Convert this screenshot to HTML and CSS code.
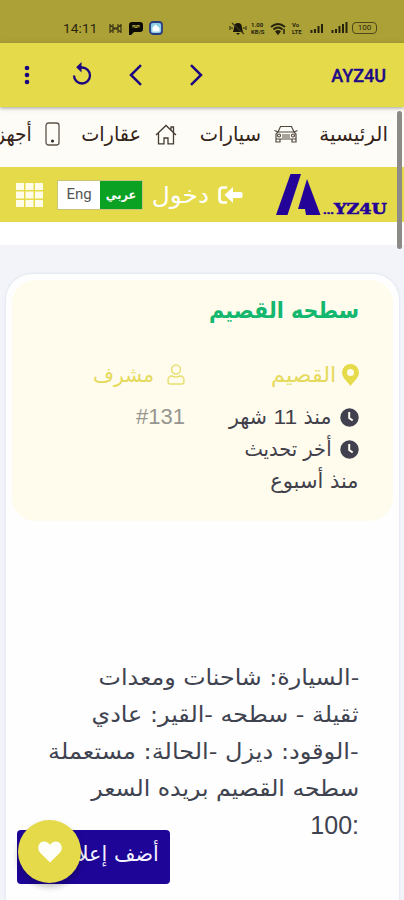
FILE: index.html
```html
<!DOCTYPE html>
<html lang="ar" dir="rtl">
<head>
<meta charset="utf-8">
<title>AYZ4U</title>
<link rel="stylesheet" href="styles.css">
</head>
<body>
<div class="screen">
  <div class="status" dir="ltr">
    <span class="time">14:11</span>
    <svg class="s-mail" width="13" height="11" viewBox="0 0 13 11"><path d="M1 1v9M12 1v9M1 2l5 4 6-4M1 9l5-4 6 4M4 1v9M9 1v9" fill="none" stroke="#3c3716" stroke-width="1.2"/></svg>
    <svg class="s-chat" width="14" height="13" viewBox="0 0 14 13"><path d="M3 0h8q3 0 3 3v4q0 3-3 3H5l-3 3H0V3q0-3 3-3z" fill="#0b0a05"/><path d="M4 5.500v-2h2v2h2v-2h2v2" fill="none" stroke="#aca136" stroke-width="1.2"/></svg>
    <svg class="s-app" width="14" height="14" viewBox="0 0 14 14"><rect x="1" y="1" width="12" height="12" rx="3" fill="#8fcfe6" stroke="#2a3d83" stroke-width="1.8"/><path d="M3.500 10.500V6.500l3-3 4 3.500v3.500z" fill="#fff"/></svg>
    <span class="grow"></span>
    <svg class="s-bell" width="18" height="13" viewBox="0 0 18 13"><path d="M9 1q4 0 4 5l1 4H4l1-4q0-5 4-5zM7 11h4l-2 2z" fill="#17150a"/><path d="M3 1l12 11M1 4v4M3 5v2M15 5v2M17 4v4" stroke="#3c3716" stroke-width="1.2"/></svg>
    <span class="speed"><b>1.00</b><b>KB/S</b></span>
    <svg class="s-wifi" width="17" height="13" viewBox="0 0 17 13"><path d="M1 5q7-6 14 0M3.500 7.500q4.500-4 9 0M6 10q2-2 4 0" fill="none" stroke="#25220e" stroke-width="1.9"/><path d="M8 12l-1.500-2h3zM14 7v5" stroke="#25220e" fill="#25220e" stroke-width="1.500"/></svg>
    <span class="volte"><b>Vo</b><b>LTE</b></span>
    <svg class="s-sig" width="15" height="12" viewBox="0 0 15 12"><path d="M1.500 8v3M5 7v4M8.500 4v7M12 2v9" stroke="#25220e" stroke-width="2"/></svg>
    <svg class="s-sig2" width="17" height="12" viewBox="0 0 17 12"><path d="M1.500 8v3M5 7v4M8.500 4v7M12 2v9M15.500 0v11" stroke="#25220e" stroke-width="2"/></svg>
    <span class="battery">100</span>
  </div>

  <div class="appbar" dir="ltr">
    <svg class="a-dots" width="6" height="20" viewBox="0 0 6 20"><g fill="#1b0781"><circle cx="3" cy="3" r="2.300"/><circle cx="3" cy="10" r="2.300"/><circle cx="3" cy="17" r="2.300"/></g></svg>
    <svg class="a-reload" width="20" height="23" viewBox="0 0 20 23"><path d="M8 5.500h2a8 8 0 1 1-8 8" fill="none" stroke="#1b0781" stroke-width="2.300"/><path d="M9.500 0v10.500L4.200 5.200z" fill="#1b0781"/></svg>
    <svg class="a-back" width="13" height="22" viewBox="0 0 13 22"><path d="M12 1.200L2 11l10 9.800" fill="none" stroke="#1b0781" stroke-width="2.500"/></svg>
    <svg class="a-next" width="13" height="22" viewBox="0 0 13 22"><path d="M1 1.200L11 11 1 20.800" fill="none" stroke="#1b0781" stroke-width="2.500"/></svg>
    <span class="grow"></span>
    <strong class="title">AYZ4U</strong>
  </div>

  <div class="view">
    <nav class="tabs">
      <span class="tab t1">الرئيسية</span>
      <svg class="i-car" width="24" height="18" viewBox="0 0 24 18"><g fill="none" stroke="#51483e" stroke-width="1.200"><path d="M4 7l2.500-5.500h11L20 7M4 7h16l2 2v5H2V9zM2 14v3h4v-3M18 14v3h4v-3M0.500 5.500L4 7M23.500 5.500L20 7M8 10h8M8 12h8"/><circle cx="5" cy="10.500" r="1.500"/><circle cx="19" cy="10.500" r="1.500"/></g></svg>
      <span class="tab t2">سيارات</span>
      <svg class="i-home" width="22" height="21" viewBox="0 0 22 21"><path d="M1 11L11 1.500 21 11M3.500 9v10.800H9V14h4v5.800h5.500V9M16 5.500V3h2.500v5" fill="none" stroke="#443b31" stroke-width="1.300"/></svg>
      <span class="tab t3">عقارات</span>
      <svg class="i-phone" width="15" height="24" viewBox="0 0 15 24"><rect x="1" y="1" width="13" height="22" rx="2.500" fill="none" stroke="#5b534a" stroke-width="1.300"/><circle cx="7.500" cy="19" r="1.500" fill="#29231b"/></svg>
      <span class="tab t4">أجهزة</span>
    </nav>

    <header class="head">
      <div class="logo" dir="ltr">
        <svg width="45" height="42" viewBox="0 0 45 42"><path d="M14.500 0H25L11.500 41H0zM31 5l13.500 36H30l-1-6h-7z" fill="#230398"/></svg>
        <span class="brand"><i>...</i>YZ4U</span>
      </div>
      <svg class="i-login" width="25" height="18" viewBox="0 0 25 18"><path d="M9 1.500H5q-3.500 0-3.500 3.500v8q0 3.500 3.500 3.500h4" fill="none" stroke="#fff" stroke-width="2.700"/><path d="M6.500 9L15 1v5h8q1.500 0 1.500 1.500v3q0 1.500-1.500 1.500h-8v5z" fill="#fff"/></svg>
      <span class="login">دخول</span>
      <div class="lang"><span class="ar">عربي</span><span class="en">Eng</span></div>
      <svg class="i-grid" width="27" height="24" viewBox="0 0 27 24"><g fill="#fffde8"><rect width="8" height="7"/><rect x="9.500" width="8" height="7"/><rect x="19" width="8" height="7"/><rect y="8.500" width="8" height="7"/><rect x="9.500" y="8.500" width="8" height="7"/><rect x="19" y="8.500" width="8" height="7"/><rect y="17" width="8" height="7"/><rect x="9.500" y="17" width="8" height="7"/><rect x="19" y="17" width="8" height="7"/></g></svg>
    </header>
    <div class="strip"></div>

    <main class="card">
      <section class="info">
        <h1><span class="fit h">سطحه القصيم</span></h1>
        <div class="cols">
          <div class="place">
            <p class="gold"><svg class="i-pin" width="17" height="22" viewBox="0 0 17 22"><path fill-rule="evenodd" d="M8.500 0a8.500 8.500 0 0 1 8.500 8.500C17 14 11 18 8.500 22 6 18 0 14 0 8.500A8.500 8.500 0 0 1 8.500 0zm0 5a3.500 3.500 0 1 0 0 7 3.500 3.500 0 0 0 0-7z" fill="#e5da4a"/></svg><span class="fit p1">القصيم</span></p>
            <p><svg class="i-clock" width="19" height="19" viewBox="0 0 19 19"><circle cx="9.500" cy="9.500" r="9.200" fill="#41404f"/><path d="M9.200 4v6l3.500 2.500" fill="none" stroke="#fffcee" stroke-width="2"/></svg><span class="fit p2">منذ <span class="num">11</span> شهر</span></p>
            <p><svg class="i-clock" width="19" height="19" viewBox="0 0 19 19"><circle cx="9.500" cy="9.500" r="9.200" fill="#41404f"/><path d="M9.200 4v6l3.500 2.500" fill="none" stroke="#fffcee" stroke-width="2"/></svg><span class="fit p3">أخر تحديث</span></p>
            <p><span class="fit p4">منذ أسبوع</span></p>
          </div>
          <div class="owner">
            <p class="gold"><svg class="i-user" width="18" height="21" viewBox="0 0 18 21"><g fill="none" stroke="#e8df72" stroke-width="1.500"><circle cx="9" cy="5.500" r="4.500"/><path d="M5 12q4 2 8 0 4 0 4 5 0 3-2 3H3q-2 0-2-3 0-5 4-5z"/></g></svg><span class="fit p5">مشرف</span></p>
            <p class="id" dir="ltr">#131</p>
          </div>
        </div>
      </section>
      <section class="desc">
        <p><span class="fit d1">-السيارة: شاحنات ومعدات</span></p>
        <p><span class="fit d2">ثقيلة - سطحه -القير: عادي</span></p>
        <p><span class="fit d3">-الوقود: ديزل -الحالة: مستعملة</span></p>
        <p><span class="fit d4">سطحه القصيم بريده السعر</span></p>
        <p class="price" dir="ltr">100:</p>
      </section>
    </main>
    <div class="scroll"></div>
  </div>
  <div class="add"><span class="fit ad">أضف إعلانك</span></div>
  <div class="fav"><svg width="24" height="22" viewBox="0 0 24 22"><path d="M12 21.500L2 11.500C-2 6.500 1.500 0 6.500.5 9.500.7 11 2.500 12 4 13 2.500 14.500.7 17.500.5 22.500 0 26 6.500 22 11.500z" fill="#fffffa"/></svg></div>
</div>
</body>
</html>
```
FILE: styles.css
```css
* { box-sizing: border-box; }
body { margin: 0; background: #f2f4f9; font-family: "DejaVu Sans Condensed", "DejaVu Sans", sans-serif; }
p, h1 { margin: 0; }
svg { display: block; flex: none; }
.screen { position: relative; width: 404px; height: 900px; overflow: hidden; }
.grow { flex: 1; }
.status { height: 43px; padding: 13px 27px 0 63px; background: #aca136; display: flex; align-items: center; color: #29250f; font-family: Roboto, sans-serif; }
.time { font-size: 13.5px; width: 46px; letter-spacing: .2px; }
.s-chat { margin-left: 7px; }
.s-app { margin-left: 6px; }
.speed, .volte { display: flex; flex-direction: column; font-size: 6px; line-height: 7px; font-weight: 500; }
.speed { width: 17px; margin-left: 4px; }
.s-wifi { margin-left: 2px; }
.volte { width: 14px; margin-left: 5px; }
.s-sig { margin-left: 4px; }
.s-sig2 { margin-left: 6px; }
.battery { width: 25px; height: 12px; margin-left: 4px; border: 1.500px solid #4d481c; border-radius: 4px; font-size: 8px; line-height: 10px; text-align: center; }
.appbar { position: relative; height: 64px; padding: 0 18px 0 24px; display: flex; align-items: center; background: #e5da4a; box-shadow: 0 1px 4px rgba(80,80,60,.55); z-index: 2; }
.a-reload { margin-left: 42px; margin-top: -3px; }
.a-back { margin-left: 37px; }
.a-next { margin-left: 48px; }
.title { color: #200a87; font: 500 18px Roboto, sans-serif; -webkit-text-stroke: .3px #200a87; }
.view { position: relative; height: 793px; }
.tabs { height: 60px; padding: 0 16px 6px 0; background: #fefcf7; display: flex; align-items: center; color: #332319; font-size: 20px; white-space: nowrap; overflow: hidden; }
.tab { flex: none; display: block; line-height: 30px; transform-origin: right center; }
.t1 { width: 69px; transform: scaleX(1.11); }
.i-car { margin: 0 4px 0 0; margin-right: 21px; }
.t2 { width: 61px; margin-right: 13px; transform: scaleX(1.08); }
.i-home { margin-right: 23px; }
.t3 { width: 59px; margin-right: 14px; transform: scaleX(1.07); }
.i-phone { margin-right: 22px; }
.t4 { margin-right: 13px; transform: scaleX(1.04); }
.head { height: 55px; padding-right: 14px; background: #e5da4a; display: flex; align-items: center; color: #fff; }
.logo { display: flex; align-items: flex-end; width: 114px; height: 42px; color: #230398; }
.brand { font: 900 15px/14px "DejaVu Serif", serif; white-space: nowrap; margin-left: 2px; margin-bottom: -2px; -webkit-text-stroke: .6px #230398; transform: scaleX(1.17); transform-origin: left; }
.brand i { font-size: 9px; font-style: normal; }
.i-login { margin-right: 33px; }
.login { width: 58px; margin-right: 9px; font-size: 23px; line-height: 30px; white-space: nowrap; transform: scaleX(1.2); transform-origin: right; }
.lang { width: 86px; height: 30px; margin-right: 8px; display: flex; border: 1px solid #c9c578; }
.lang span { width: 42px; line-height: 27px; text-align: center; font-size: 15px; }
.lang .ar { background: #0ba123; font-weight: bold; font-size: 12.5px; }
.en { background: #fff; color: #555; font-family: Roboto, sans-serif; }
.i-grid { margin-right: 14px; }
.strip { height: 23px; background: #fff; }
.card { margin: 29px 5px 0 6px; padding: 6px 6px 0; height: 650px; background: #fefefe; border-radius: 26px 26px 0 0; box-shadow: 0 0 3px rgba(180,190,215,.45); }
.info { height: 241px; padding: 13px 34px 0 20px; border-radius: 23px; background: #fffcee; color: #41404a; }
h1 { height: 65px; color: #13b76e; font-size: 23px; line-height: 34px; }
.fit { display: inline-block; white-space: nowrap; transform-origin: right center; }
.p1 { transform: scaleX(1.18); }
.p2 { transform: scaleX(1.085); }
.p3 { transform: scaleX(1.03); }
.p4 { transform: scaleX(1.11); }
.p5 { transform: scaleX(1.07); }
.d1 { transform: scaleX(1.2); }
.d2 { transform: scaleX(1.205); }
.d3 { transform: scaleX(1.215); }
.d4 { transform: scaleX(1.19); }
.ad { transform: scaleX(1.1); }
.cols { display: flex; }
.place { width: 174px; }
.owner { flex: 1; }
.place p, .owner p { display: flex; align-items: center; height: 32px; font-size: 21px; line-height: 32px; }
.place p.gold, .owner p.gold { height: 43px; padding-bottom: 10px; color: #e5da5b; }
.i-pin { margin-left: 6px; }
.i-clock { margin-left: 8px; }
.i-user { margin-left: 13px; }
.owner p.id { color: #96958f; font-family: "Liberation Sans", sans-serif; font-size: 22px; justify-content: flex-end; }
.num { font-family: "Liberation Sans", sans-serif; }
.desc { padding: 138px 34px 0 0; color: #3f4350; font-size: 22px; line-height: 37px; }
.desc p { height: 37px; }
.price { text-align: right; font: 25px/36px "Liberation Sans", sans-serif; }
.scroll { position: absolute; right: 2px; top: 4px; width: 5px; height: 138px; border-radius: 3px; background: #8c8b88; }
.add { position: absolute; left: 17px; top: 830px; width: 153px; height: 54px; padding: 0 11px; border-radius: 4px; background: #1e0597; color: #f4f2ff; font-size: 21px; line-height: 48px; }
.fav { position: absolute; left: 18px; top: 820px; width: 63px; height: 63px; border-radius: 50%; background: #e5da4a; box-shadow: 0 4px 6px rgba(0,0,0,.25); display: flex; align-items: center; justify-content: center; }
```
